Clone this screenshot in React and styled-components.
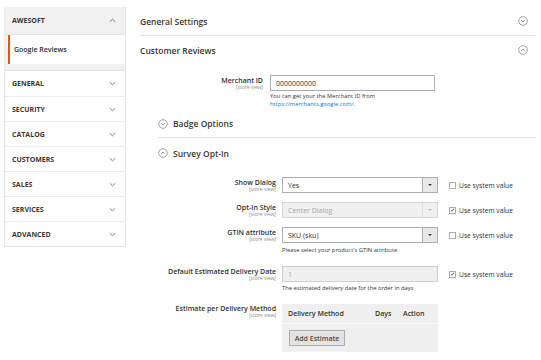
import React from 'react';
import styled, { createGlobalStyle } from 'styled-components';

const Global = createGlobalStyle`
  html, body { margin: 0; padding: 0; background: #fff; }
  body { font-family: "Open Sans", "Noto Sans", sans-serif; color: #303030; }
  * { box-sizing: border-box; }
`;

const Page = styled.div`
  display: flex;
  align-items: flex-start;
  width: 541px;
  height: 360px;
  overflow: hidden;
  padding: 7px 6px 0 4px;
`;

const Sidebar = styled.aside`
  width: 122px;
  flex: none;
`;

const NavOpen = styled.div`
  background: #f1f1f1;
  padding-bottom: 6px;
  border-left: 1px solid #ececec;
  border-right: 1px solid #e3e3e3;
`;

const NavTitle = styled.div`
  display: flex;
  align-items: center;
  justify-content: space-between;
  height: 28px;
  padding: 0 9px 0 7px;
  border-bottom: 1px solid #e3e3e3;
  font-size: 7px;
  font-weight: 700;
  color: #41362f;
  text-transform: uppercase;
`;

const NavItem = styled.div`
  display: flex;
  align-items: center;
  height: 29px;
  margin-left: 3px;
  padding-left: 4px;
  background: #fff;
  border-left: 2px solid #eb5202;
  font-size: 7px;
  font-weight: 600;
  color: #303030;
`;

const NavList = styled.div`
  background: #fff;
  border: 1px solid #e3e3e3;
`;

const NavRow = styled.div`
  display: flex;
  align-items: center;
  justify-content: space-between;
  height: 25px;
  padding: 0 9px 0 7px;
  border-top: ${p => (p.$first ? 'none' : '1px solid #ececec')};
  font-size: 7px;
  font-weight: 700;
  color: #41362f;
  text-transform: uppercase;
`;

const Main = styled.main`
  flex: 1;
  margin-left: 14px;
`;

const SectionHead = styled.div`
  display: flex;
  align-items: center;
  justify-content: space-between;
  height: ${p => p.$h || 28}px;
  padding-right: 7px;
  border-bottom: ${p => (p.$line ? '1px solid #e3e3e3' : 'none')};
  font-size: 8.5px;
  font-weight: 600;
  color: #41362f;
`;

const Group = styled.div`
  margin-left: 18px;
`;

const GroupHead = styled.div`
  display: flex;
  align-items: center;
  gap: 5px;
  height: ${p => p.$h}px;
  margin-top: ${p => p.$mt || 0}px;
  border-bottom: ${p => (p.$line ? '1px solid #e3e3e3' : 'none')};
  font-size: 8.5px;
  font-weight: 600;
  color: #41362f;
`;

const Field = styled.div`
  display: grid;
  grid-template-columns: ${p => p.$label}px ${p => p.$control}px auto;
  column-gap: ${p => p.$gap}px;
  margin-top: ${p => p.$mt || 0}px;
  margin-bottom: ${p => p.$mb || 0}px;
  align-items: start;
`;

const Label = styled.div`
  text-align: right;
  padding-top: ${p => (p.$pt !== undefined ? p.$pt : 2)}px;
`;

const LabelText = styled.div`
  font-size: 7px;
  font-weight: 600;
  line-height: 8px;
  color: #303030;
`;

const Scope = styled.div`
  font-size: 5px;
  line-height: 5px;
  color: #8a8a8a;
`;

const Input = styled.div`
  height: 16px;
  display: flex;
  align-items: center;
  padding: 0 5px;
  border: 1px solid ${p => (p.$disabled ? '#cfcfcf' : '#adadad')};
  background: ${p => (p.$disabled ? '#f0f0f0' : '#fff')};
  color: ${p => (p.$disabled ? '#a8a8a8' : '#303030')};
  font-size: 7px;
`;

const Select = styled.div`
  height: 16px;
  display: flex;
  align-items: stretch;
  border: 1px solid ${p => (p.$disabled ? '#d6d6d6' : '#adadad')};
  background: ${p => (p.$disabled ? '#f0f0f0' : '#fff')};
  color: ${p => (p.$disabled ? '#a8a8a8' : '#303030')};
  font-size: 7px;
`;

const SelectValue = styled.div`
  flex: 1;
  display: flex;
  align-items: center;
  padding-left: 5px;
`;

const SelectArrow = styled.div`
  width: 15px;
  display: flex;
  align-items: center;
  justify-content: center;
  border-left: 1px solid ${p => (p.$disabled ? '#dcdcdc' : '#adadad')};
  background: ${p => (p.$disabled ? '#f0f0f0' : '#e8e8e8')};
  &::after {
    content: '';
    border-left: 2px solid transparent;
    border-right: 2px solid transparent;
    border-top: 2.5px solid ${p => (p.$disabled ? '#bcbcbc' : '#41362f')};
  }
`;

const Help = styled.div`
  font-size: 5.8px;
  line-height: 8px;
  margin-top: ${p => p.$mt}px;
  color: #303030;
  a { color: #007bdb; text-decoration: none; }
`;

const UseSystem = styled.label`
  display: flex;
  align-items: center;
  gap: 3px;
  height: 16px;
  margin-left: 5px;
  font-size: 6.7px;
  color: #303030;
`;

const Box = styled.span`
  width: 7px;
  height: 7px;
  border: 1px solid #adadad;
  background: #fff;
  display: flex;
  align-items: center;
  justify-content: center;
`;

const Table = styled.div`
  background: #efefef;
`;

const TableHead = styled.div`
  display: grid;
  grid-template-columns: 87px 28px auto;
  align-items: center;
  height: 20px;
  padding-left: 6px;
  border-bottom: 1px solid #f9f9f9;
  font-size: 7px;
  font-weight: 600;
  color: #303030;
`;

const TableBody = styled.div`
  display: flex;
  padding: 6px 7px;
`;

const Button = styled.button`
  display: block;
  height: 16px;
  width: 56px;
  padding: 0;
  margin: 0;
  border: 1px solid #adadad;
  background: #e3e3e3;
  color: #514943;
  font-family: inherit;
  font-size: 7px;
  font-weight: 600;
`;

const Chevron = ({ up }) => (
  <svg width="7" height="5" viewBox="0 0 7 5">
    <polyline
      points={up ? '0.8,3.8 3.5,1.2 6.2,3.8' : '0.8,1.2 3.5,3.8 6.2,1.2'}
      fill="none"
      stroke="#6f6f6f"
      strokeWidth="0.9"
    />
  </svg>
);

const CircleIcon = ({ up }) => (
  <svg width="10" height="10" viewBox="0 0 10 10">
    <circle cx="5" cy="5" r="4.3" fill="none" stroke="#8a8a8a" strokeWidth="0.8" />
    <polyline
      points={up ? '3.2,5.9 5,4.1 6.8,5.9' : '3.2,4.1 5,5.9 6.8,4.1'}
      fill="none"
      stroke="#6f6f6f"
      strokeWidth="0.8"
    />
  </svg>
);

const Check = () => (
  <svg width="6" height="6" viewBox="0 0 6 6">
    <polyline points="1,3 2.4,4.5 5,1.2" fill="none" stroke="#303030" strokeWidth="0.9" />
  </svg>
);

const SystemValue = ({ checked }) => (
  <UseSystem>
    <Box>{checked && <Check />}</Box>
    Use system value
  </UseSystem>
);

const FieldLabel = ({ text, pt }) => (
  <Label $pt={pt}>
    <LabelText>{text}</LabelText>
    <Scope>[store view]</Scope>
  </Label>
);

const navItems = ['General', 'Security', 'Catalog', 'Customers', 'Sales', 'Services', 'Advanced'];

export default function App() {
  return (
    <>
      <Global />
      <Page>
        <Sidebar>
          <NavOpen>
            <NavTitle>
              Awesoft
              <Chevron up />
            </NavTitle>
            <NavItem>Google Reviews</NavItem>
          </NavOpen>
          <NavList>
            {navItems.map((n, i) => (
              <NavRow key={n} $first={i === 0}>
                {n}
                <Chevron />
              </NavRow>
            ))}
          </NavList>
        </Sidebar>
        <Main>
          <SectionHead $h={29} $line>
            General Settings
            <CircleIcon />
          </SectionHead>
          <SectionHead $h={28}>
            Customer Reviews
            <CircleIcon up />
          </SectionHead>

          <Field $label={123} $control={165} $gap={7} $mt={11}>
            <FieldLabel text="Merchant ID" />
            <div>
              <Input>0000000000</Input>
              <Help $mt={1}>
                You can get your the Merchant ID from
                <br />
                <a href="#">https://merchants.google.com/</a>.
              </Help>
            </div>
          </Field>

          <Group>
            <GroupHead $h={28} $mt={2} $line>
              <CircleIcon />
              Badge Options
            </GroupHead>
            <GroupHead $h={30}>
              <CircleIcon up />
              Survey Opt-In
            </GroupHead>

            <Field $label={118} $control={156} $gap={6} $mt={9} $mb={9}>
              <FieldLabel text="Show Dialog" />
              <Select>
                <SelectValue>Yes</SelectValue>
                <SelectArrow />
              </Select>
              <SystemValue />
            </Field>

            <Field $label={118} $control={156} $gap={6} $mb={9}>
              <FieldLabel text="Opt-In Style" />
              <Select $disabled>
                <SelectValue>Center Dialog</SelectValue>
                <SelectArrow $disabled />
              </Select>
              <SystemValue checked />
            </Field>

            <Field $label={118} $control={156} $gap={6} $mb={12}>
              <FieldLabel text="GTIN attribute" />
              <div>
                <Select>
                  <SelectValue>SKU (sku)</SelectValue>
                  <SelectArrow />
                </Select>
                <Help $mt={3}>Please select your product's GTIN attribute</Help>
              </div>
              <SystemValue />
            </Field>

            <Field $label={118} $control={156} $gap={6} $mb={12}>
              <FieldLabel text="Default Estimated Delivery Date" />
              <div>
                <Input $disabled>1</Input>
                <Help $mt={2}>The estimated delivery date for the order in days</Help>
              </div>
              <SystemValue checked />
            </Field>

            <Field $label={118} $control={156} $gap={6}>
              <FieldLabel text="Estimate per Delivery Method" pt={1} />
              <Table>
                <TableHead>
                  <span>Delivery Method</span>
                  <span>Days</span>
                  <span>Action</span>
                </TableHead>
                <TableBody>
                  <Button>Add Estimate</Button>
                </TableBody>
              </Table>
            </Field>
          </Group>
        </Main>
      </Page>
    </>
  );
}
